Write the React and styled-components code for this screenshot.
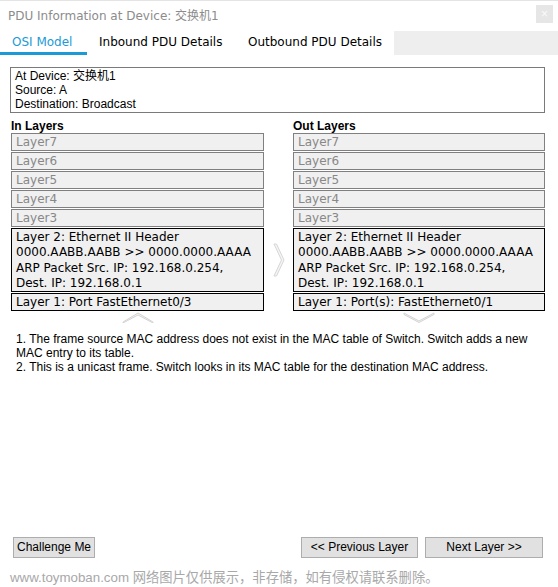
import React from "react";
import styled, { createGlobalStyle } from "styled-components";

const Global = createGlobalStyle`
  html, body { margin: 0; padding: 0; background: #fff; }
  body { width: 558px; height: 587px; overflow: hidden; }
`;

const SANS = `"DejaVu Sans", "Noto Sans CJK SC", sans-serif`;
const ARIAL = `"Liberation Sans", Arial, "Noto Sans CJK SC", sans-serif`;

const Window = styled.div`
  width: 558px;
  height: 587px;
  box-sizing: border-box;
  border-top: 1px solid #e4e4e4;
  display: flex;
  flex-direction: column;
  background: #fff;
  overflow: hidden;
`;

const TitleBar = styled.div`
  height: 30px;
  display: flex;
  align-items: center;
  justify-content: space-between;
  padding: 0 5px 0 8px;
`;

const Title = styled.div`
  font-family: ${SANS};
  font-size: 12px;
  color: #8c8c8c;
  margin-top: -3px;
`;

const CloseButton = styled.div`
  width: 17px;
  height: 18px;
  margin-top: -4px;
  background: #e6e6e6;
  color: #fafafa;
  font-family: ${ARIAL};
  font-size: 12px;
  line-height: 18px;
  text-align: center;
`;

const TabBar = styled.div`
  height: 24px;
  display: flex;
`;

const Tab = styled.div`
  box-sizing: border-box;
  width: ${(p) => p.$w}px;
  padding: 0 0 0 12px;
  height: 24px;
  line-height: 22px;
  font-family: ${SANS};
  font-size: 12px;
  white-space: nowrap;
  color: ${(p) => (p.$active ? "#1b9ad6" : "#000")};
  border-bottom: 3px solid ${(p) => (p.$active ? "#1b9ad6" : "transparent")};
`;

const TabFiller = styled.div`
  flex: 1;
  background: #eeeeee;
`;

const Content = styled.div`
  padding: 12px 13px 0 10px;
`;

const InfoBox = styled.div`
  border: 1px solid #7a7a7a;
  padding: 1px 4px 1px 4px;
  font-family: ${ARIAL};
  font-size: 12px;
  line-height: 14px;
  color: #000;
`;

const Layers = styled.div`
  margin-top: 4px;
  padding-left: 1px;
  display: grid;
  grid-template-columns: 253px 29px 252px;
  row-gap: 1px;
`;

const Heading = styled.div`
  grid-column: ${(p) => p.$col};
  grid-row: 1;
  font-family: ${ARIAL};
  font-weight: bold;
  font-size: 12px;
  line-height: 19px;
  height: 15px;
  color: #000;
`;

const Stack = styled.div`
  grid-column: ${(p) => p.$col};
  grid-row: 2;
  display: flex;
  flex-direction: column;
  gap: 1px;
`;

const LayerBox = styled.div`
  grid-column: ${(p) => p.$col};
  grid-row: ${(p) => p.$row};
  box-sizing: border-box;
  min-height: 18px;
  border: 1px solid ${(p) => (p.$active ? "#000" : "#808080")};
  background: #f0f0f0;
  padding: ${(p) => (p.$multi ? "1px 4px 0" : "0 4px")};
  font-family: ${SANS};
  font-size: 12px;
  line-height: ${(p) => (p.$multi ? "15.3px" : "16px")};
  color: ${(p) => (p.$active ? "#000" : "#888")};
  white-space: nowrap;
`;

const Gutter = styled.div`
  grid-column: 2;
  grid-row: 3;
  display: flex;
  align-items: center;
  justify-content: center;
`;

const ArrowCell = styled.div`
  grid-column: ${(p) => p.$col};
  grid-row: 5;
  display: flex;
  justify-content: center;
  height: 12px;
`;

const Description = styled.div`
  margin-top: 8px;
  padding-left: 6px;
  font-family: ${ARIAL};
  font-size: 12px;
  line-height: 14px;
  color: #000;
`;

const Spacer = styled.div`
  flex: 1;
`;

const ButtonRow = styled.div`
  display: flex;
  justify-content: space-between;
  padding: 0 15px 0 13px;
`;

const ButtonGroup = styled.div`
  display: flex;
  gap: 7px;
`;

const Button = styled.button`
  box-sizing: border-box;
  height: 21px;
  width: ${(p) => (p.$w ? `${p.$w}px` : "auto")};
  padding: 0 3px;
  margin: 0;
  background: #e1e1e1;
  border: 1px solid #adadad;
  border-radius: 0;
  font-family: ${ARIAL};
  font-size: 12px;
  color: #000;
  line-height: 19px;
`;

const Watermark = styled.div`
  height: 29px;
  box-sizing: border-box;
  padding: 10px 0 0 10px;
  line-height: 20px;
  font-family: ${ARIAL};
  font-size: 13.3px;
  color: #a8a8a8;
  white-space: nowrap;
`;

const RightChevron = () => (
  <svg width="12" height="34" viewBox="0 0 12 34">
    <polygon points="1,1 3.5,1 11,17 3.5,33 1,33 8.5,17" fill="#f6f6f6" stroke="#d6d6d6" strokeWidth="1" />
  </svg>
);

const UpChevron = () => (
  <svg width="32" height="11" viewBox="0 0 32 11">
    <polygon points="1,10 16,1 31,10 31,11 16,3 1,11" fill="#f4f4f4" stroke="#d4d4d4" strokeWidth="1" />
  </svg>
);

const DownChevron = () => (
  <svg width="32" height="11" viewBox="0 0 32 11">
    <polygon points="1,1 16,9 31,1 31,2.5 16,10.5 1,2.5" fill="#f4f4f4" stroke="#d4d4d4" strokeWidth="1" />
  </svg>
);

const upper = ["Layer7", "Layer6", "Layer5", "Layer4", "Layer3"];

const layer2 = [
  "Layer 2: Ethernet II Header",
  "0000.AABB.AABB >> 0000.0000.AAAA",
  "ARP Packet Src. IP: 192.168.0.254,",
  "Dest. IP: 192.168.0.1",
];

const Column = ({ col, title, layer1, arrow }) => (
  <>
    <Heading $col={col}>{title}</Heading>
    <Stack $col={col}>
      {upper.map((l) => (
        <LayerBox key={l}>{l}</LayerBox>
      ))}
    </Stack>
    <LayerBox $col={col} $row={3} $active $multi>
      {layer2.map((t) => (
        <div key={t}>{t}</div>
      ))}
    </LayerBox>
    <LayerBox $col={col} $row={4} $active>
      {layer1}
    </LayerBox>
    <ArrowCell $col={col}>{arrow}</ArrowCell>
  </>
);

export default function App() {
  return (
    <>
      <Global />
      <Window>
        <TitleBar>
          <Title>PDU Information at Device: 交换机1</Title>
          <CloseButton>×</CloseButton>
        </TitleBar>
        <TabBar>
          <Tab $active $w={87}>OSI Model</Tab>
          <Tab $w={149}>Inbound PDU Details</Tab>
          <Tab $w={158}>Outbound PDU Details</Tab>
          <TabFiller />
        </TabBar>
        <Content>
          <InfoBox>
            <div>At Device: 交换机1</div>
            <div>Source: A</div>
            <div>Destination: Broadcast</div>
          </InfoBox>
          <Layers>
            <Column col={1} title="In Layers" layer1="Layer 1: Port FastEthernet0/3" arrow={<UpChevron />} />
            <Gutter>
              <RightChevron />
            </Gutter>
            <Column col={3} title="Out Layers" layer1="Layer 1: Port(s): FastEthernet0/1" arrow={<DownChevron />} />
          </Layers>
          <Description>
            <div>1. The frame source MAC address does not exist in the MAC table of Switch. Switch adds a new MAC entry to its table.</div>
            <div>2. This is a unicast frame. Switch looks in its MAC table for the destination MAC address.</div>
          </Description>
        </Content>
        <Spacer />
        <ButtonRow>
          <Button>Challenge Me</Button>
          <ButtonGroup>
            <Button $w={117}>&lt;&lt; Previous Layer</Button>
            <Button $w={118}>Next Layer &gt;&gt;</Button>
          </ButtonGroup>
        </ButtonRow>
        <Watermark>www.toymoban.com 网络图片仅供展示，非存储，如有侵权请联系删除。</Watermark>
      </Window>
    </>
  );
}
